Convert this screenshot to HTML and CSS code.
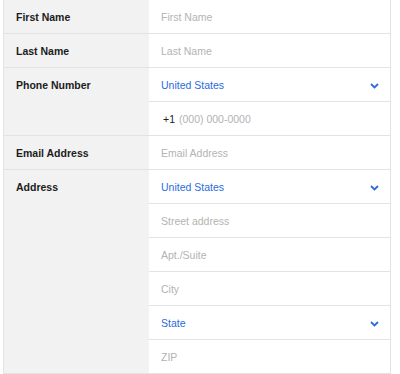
FILE: index.html
```html
<!DOCTYPE html>
<html lang="en">
<head>
    <meta charset="UTF-8">
    <meta name="viewport" content="width=device-width, initial-scale=1.0">
    <title>Contact Form</title>
    <link rel="stylesheet" href="styles.css">
</head>
<body>
    <form class="contact-form">
        <!-- First name -->
        <div class="form-row">
            <label class="row-label" for="first-name">First Name</label>
            <div class="row-fields">
                <input class="field" id="first-name" type="text" placeholder="First Name">
            </div>
        </div>

        <!-- Last name -->
        <div class="form-row">
            <label class="row-label" for="last-name">Last Name</label>
            <div class="row-fields">
                <input class="field" id="last-name" type="text" placeholder="Last Name">
            </div>
        </div>

        <!-- Phone number -->
        <div class="form-row">
            <label class="row-label" for="phone">Phone Number</label>
            <div class="row-fields">
                <div class="select-wrap">
                    <select class="field select" id="phone-country">
                        <option>United States</option>
                    </select>
                    <svg class="chevron" width="9" height="6" viewBox="0 0 9 6"><path d="M1 1l3.5 3.5L8 1" fill="none" stroke="currentColor" stroke-width="1.8"/></svg>
                </div>
                <div class="phone-field">
                    <span class="prefix">+1</span>
                    <input class="field" id="phone" type="tel" placeholder="(000) 000-0000">
                </div>
            </div>
        </div>

        <!-- Email -->
        <div class="form-row">
            <label class="row-label" for="email">Email Address</label>
            <div class="row-fields">
                <input class="field" id="email" type="email" placeholder="Email Address">
            </div>
        </div>

        <!-- Address -->
        <div class="form-row">
            <label class="row-label" for="street">Address</label>
            <div class="row-fields">
                <div class="select-wrap">
                    <select class="field select" id="country">
                        <option>United States</option>
                    </select>
                    <svg class="chevron" width="9" height="6" viewBox="0 0 9 6"><path d="M1 1l3.5 3.5L8 1" fill="none" stroke="currentColor" stroke-width="1.8"/></svg>
                </div>
                <input class="field" id="street" type="text" placeholder="Street address">
                <input class="field" id="suite" type="text" placeholder="Apt./Suite">
                <input class="field" id="city" type="text" placeholder="City">
                <div class="select-wrap">
                    <select class="field select" id="state">
                        <option>State</option>
                    </select>
                    <svg class="chevron" width="9" height="6" viewBox="0 0 9 6"><path d="M1 1l3.5 3.5L8 1" fill="none" stroke="currentColor" stroke-width="1.8"/></svg>
                </div>
                <input class="field" id="zip" type="text" placeholder="ZIP">
            </div>
        </div>
    </form>
</body>
</html>
```

FILE: styles.css
```css
* {
    margin: 0;
    padding: 0;
    box-sizing: border-box;
}

body {
    font-family: 'Liberation Sans', Arial, sans-serif;
    background-color: #fff;
    color: #1c1c1c;
}

.contact-form {
    margin-left: 3px;
    width: 388px;
    border-left: 1px solid #e3e3e3;
    border-right: 1px solid #e3e3e3;
}

.form-row {
    display: grid;
    grid-template-columns: 145px 1fr;
    border-bottom: 1px solid #e3e3e3;
}

.row-label {
    background-color: #f2f2f2;
    font-size: 10.5px;
    font-weight: 700;
    line-height: 32px;
    padding: 1px 0 0 12px;
    color: #1c1c1c;
}

.row-fields {
    display: flex;
    flex-direction: column;
}

.field {
    display: block;
    width: 100%;
    height: 33px;
    border: none;
    outline: none;
    padding: 1px 12px 0;
    font-family: inherit;
    font-size: 10.5px;
    color: #1c1c1c;
    background: transparent;
}

.row-fields > * + * {
    border-top: 1px solid #e3e3e3;
}

/* border-box: make room for the divider line */
.row-fields > * + input.field {
    height: 34px;
}

.field::placeholder {
    color: #b3b3b3;
}

/* Dropdowns */
.select-wrap {
    position: relative;
}

.select {
    appearance: none;
    -webkit-appearance: none;
    color: #2a6be0;
    cursor: pointer;
}

.chevron {
    position: absolute;
    right: 11px;
    top: 15px;
    color: #2a6be0;
    pointer-events: none;
}

/* Phone */
.phone-field {
    display: flex;
    align-items: center;
    padding-left: 14px;
}

.prefix {
    font-size: 10.5px;
    color: #1c1c1c;
    padding-top: 1px;
}

.phone-field .field {
    padding-left: 4px;
}
```
